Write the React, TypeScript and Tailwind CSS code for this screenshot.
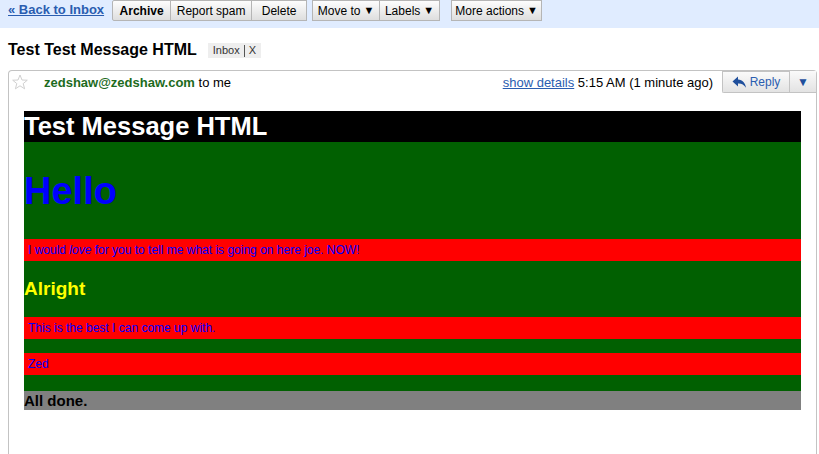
import React from "react";

const font = { fontFamily: '"Liberation Sans", Arial, sans-serif' };

function ToolButton({
  label,
  width,
  bold,
  arrow,
  className = "",
}: {
  label: string;
  width: string;
  bold?: boolean;
  arrow?: boolean;
  className?: string;
}) {
  return (
    <div
      className={`h-[21px] ${width} flex items-center justify-center border border-[#b5b5b5] bg-gradient-to-b from-[#fdfdfd] to-[#dedede] text-[12px] text-black ${bold ? "font-bold" : ""} ${className}`}
    >
      {label}
      {arrow && <span className="ml-[3px] text-[11px]">▼</span>}
    </div>
  );
}

function Star() {
  return (
    <svg width="16" height="16" viewBox="0 0 16 16" className="shrink-0">
      <polygon
        points="8,1 10,6 15.3,6.2 11.2,9.6 12.6,14.8 8,11.8 3.4,14.8 4.8,9.6 0.7,6.2 6,6"
        fill="#fff"
        stroke="#d0d0d0"
        strokeWidth="1"
      />
    </svg>
  );
}

function ReplyIcon() {
  return (
    <svg width="15" height="13" viewBox="0 0 15 13">
      <path d="M6 0.5 L0.5 5.5 L6 10.5 V7.5 C9.5 7.3 12 8.6 14 11.8 C13.4 7.2 10.6 4.1 6 3.6 Z" fill="#1f4f9c" />
    </svg>
  );
}

export default function App() {
  return (
    <div className="w-[819px] h-[454px] overflow-hidden bg-white" style={font}>
      {/* toolbar */}
      <div className="h-[28px] bg-[#e0ecff] flex items-start pl-2">
        <a href="#" className="mt-[2px] text-[13px] font-bold text-[#2a5db0] underline leading-[16px]">
          « Back to Inbox
        </a>
        <div className="flex ml-[8px]">
          <ToolButton label="Archive" width="w-[59px]" bold className="rounded-l-[2px]" />
          <ToolButton label="Report spam" width="w-[82px]" className="-ml-px" />
          <ToolButton label="Delete" width="w-[56px]" className="-ml-px" />
        </div>
        <div className="flex ml-[5px]">
          <ToolButton label="Move to" width="w-[68px]" arrow />
          <ToolButton label="Labels" width="w-[61px]" arrow className="-ml-px" />
        </div>
        <div className="flex ml-[11px]">
          <ToolButton label="More actions" width="w-[91px]" arrow />
        </div>
      </div>

      {/* subject */}
      <div className="h-[42px] flex items-center pl-2 pt-[2px]">
        <h1 className="text-[16px] font-bold text-black">Test Test Message HTML</h1>
        <div className="ml-[11px] mt-[1px] h-[15px] flex items-center bg-[#eeeeee] text-[11px] text-[#333] px-[5px]">
          <span>Inbox</span>
          <span className="mx-[4px] h-[12px] w-px bg-[#555]" />
          <span>X</span>
        </div>
      </div>

      {/* message card */}
      <div className="ml-2 w-[809px] h-[400px] border-l border-t border-r border-[#c3c3c3] rounded-tl-[4px] rounded-tr-[4px]">
        <div className="h-[40px] flex items-start">
          <div className="pl-[3px] pt-[3px]">
            <Star />
          </div>
          <div className="ml-[16px] mt-[4px] text-[13px] leading-[16px]">
            <span className="font-bold text-[#1d6b1d]">zedshaw@zedshaw.com</span>
            <span className="text-black"> to me</span>
          </div>
          <div className="ml-auto mt-[4px] text-[13px] leading-[16px] text-black">
            <a href="#" className="text-[#2a5db0] underline">show details</a> 5:15 AM (1 minute ago)
          </div>
          <div className="ml-[9px] flex h-[22px]">
            <div className="w-[67px] flex items-center justify-center gap-[3px] border border-[#c3c3c3] border-r-0 rounded-bl-[2px] bg-gradient-to-b from-[#fafafa] to-[#e3e3e3] text-[12px] text-[#2a5db0]">
              <ReplyIcon />
              Reply
            </div>
            <div className="w-[27px] flex items-center justify-center border-l border-b border-[#c3c3c3] bg-gradient-to-b from-[#fafafa] to-[#e3e3e3] text-[12px] text-[#1f4f9c]">
              ▼
            </div>
          </div>
        </div>

        {/* html body */}
        <div className="ml-[15px] w-[777px]">
          <div className="h-[31px] bg-black text-white text-[25.5px] font-bold leading-[31px]">
            Test Message HTML
          </div>
          <div className="bg-[#016001]">
            <div className="h-[97px] flex items-center text-[38px] font-bold text-[#0000ff] leading-none">
              Hello
            </div>
            <p className="h-[22px] bg-[#ff0000] text-[12px] leading-[23px] text-[#0000ff] pl-1">
              I would <em>love</em> for you to tell me what is going on here joe. NOW!
            </p>
            <div className="h-[56px] flex items-center text-[19px] font-bold text-[#ffff00]">
              Alright
            </div>
            <p className="h-[22px] bg-[#ff0000] text-[12px] leading-[23px] text-[#0000ff] pl-1">
              This is the best I can come up with.
            </p>
            <div className="h-[14px]" />
            <p className="h-[22px] bg-[#ff0000] text-[12px] leading-[23px] text-[#0000ff] pl-1">
              Zed
            </p>
            <div className="h-[16px]" />
          </div>
          <div className="h-[19px] bg-[#808080] text-[15px] font-bold leading-[19px] text-black">
            All done.
          </div>
        </div>
      </div>
    </div>
  );
}
